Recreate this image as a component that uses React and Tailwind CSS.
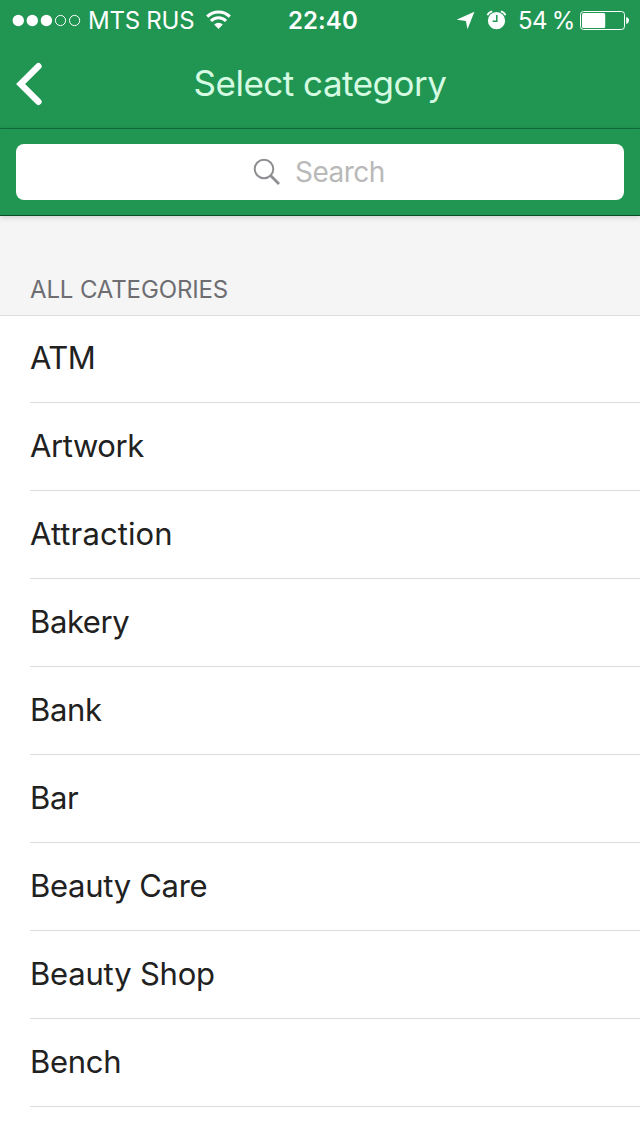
const categories = [
  { name: "ATM", tracking: "tracking-[-0.5px]" },
  { name: "Artwork", tracking: "tracking-[-0.4px]" },
  { name: "Attraction", tracking: "tracking-[0.1px]" },
  { name: "Bakery", tracking: "tracking-[-0.4px]" },
  { name: "Bank", tracking: "tracking-[-0.3px]" },
  { name: "Bar", tracking: "tracking-[-0.3px]" },
  { name: "Beauty Care", tracking: "tracking-[-0.3px]" },
  { name: "Beauty Shop", tracking: "tracking-[-0.2px]" },
  { name: "Bench", tracking: "tracking-[-0.3px]" },
];

function SignalDots() {
  return (
    <svg className="w-[70px] h-10 shrink-0" viewBox="0 0 70 40" fill="none">
      <circle cx="6.3" cy="20.5" r="5.7" fill="white" />
      <circle cx="20.3" cy="20.5" r="5.7" fill="white" />
      <circle cx="34.4" cy="20.5" r="5.7" fill="white" />
      <circle cx="48.5" cy="20.5" r="5.1" stroke="white" />
      <circle cx="62.6" cy="20.5" r="5.1" stroke="white" />
    </svg>
  );
}

function WifiIcon() {
  return (
    <svg className="w-[26px] h-10 shrink-0" viewBox="0 0 26 40" fill="none">
      <path d="M1.2 16.6a16 16 0 0 1 22.6 0" stroke="white" strokeWidth="3" />
      <path d="M5 21a10.5 10.5 0 0 1 15 0" stroke="white" strokeWidth="3" />
      <path d="M8.2 24.6a6.2 6.2 0 0 1 8.6 0L12.5 29z" fill="white" />
    </svg>
  );
}

function LocationIcon() {
  return (
    <svg className="w-[18px] h-10 shrink-0" viewBox="0 0 18 40">
      <path d="M17.4 11.8 10.5 29.3 8.9 20.9 -0.4 19.6z" fill="white" />
    </svg>
  );
}

function AlarmIcon() {
  return (
    <svg className="w-[22px] h-10 shrink-0" viewBox="0 0 22 40" fill="none">
      <circle cx="10.5" cy="20.7" r="8.6" fill="white" />
      <path d="M1.5 15.3Q2.4 12.5 6.2 11.4M14.8 11.4Q18.6 12.5 19.5 15.3" stroke="white" strokeWidth="1.8" />
      <path d="M10.8 15v6.2H6.6" stroke="#219653" strokeWidth="1.5" />
    </svg>
  );
}

function BatteryIcon() {
  return (
    <svg className="w-[50px] h-10 shrink-0" viewBox="0 0 50 40" fill="none">
      <rect x="0.5" y="11.5" width="44" height="18" rx="3" stroke="white" />
      <rect x="2" y="13" width="23.2" height="15" rx="1.5" fill="white" />
      <path d="M46.2 17q2.8.8 2.8 3.5T46.2 24z" fill="white" />
    </svg>
  );
}

function StatusBar() {
  return (
    <div className="flex h-10 items-center pl-3 text-[24px] leading-10 text-white whitespace-nowrap">
      <SignalDots />
      <span className="ml-[6px] w-[112px] pt-[2px] tracking-[-0.25px]">MTS RUS</span>
      <span className="ml-[6px] flex">
        <WifiIcon />
      </span>
      <span className="ml-[56px] w-[74px] pt-[2px] font-semibold tracking-[0.1px]">22:40</span>
      <span className="ml-[95px] flex">
        <LocationIcon />
      </span>
      <span className="ml-[11px] flex">
        <AlarmIcon />
      </span>
      <span className="ml-[10px] w-[62px] pt-[2px] tracking-[-0.5px] [word-spacing:-1.5px]">54 %</span>
      <BatteryIcon />
    </div>
  );
}

function NavBar() {
  return (
    <div className="flex h-[89px] items-start border-b border-[#126f3a]">
      <button type="button" aria-label="Back" className="w-[60px] shrink-0">
        <svg className="w-[60px] h-[88px]" viewBox="0 0 60 88" fill="none">
          <path d="M38.4 26.2 20.6 44 38.4 61.8" stroke="white" strokeWidth="6.4" strokeLinecap="round" />
        </svg>
      </button>
      <h1 className="flex-1 pr-[60px] text-center text-[35px] leading-[86px] text-[#d5fbe2] tracking-[-0.5px]">
        Select category
      </h1>
    </div>
  );
}

function SearchBar() {
  return (
    <div className="relative h-[87px] border-b border-[#0b4f29] px-4 pt-[15px] shadow-[0_1px_6px_rgba(0,0,0,0.18)]">
      <div className="flex h-14 items-center rounded-lg bg-white pl-[236px]">
        <svg className="w-[30px] h-[30px]" viewBox="0 0 30 30" fill="none" stroke="#8e8e93">
          <circle cx="12" cy="12" r="9.3" strokeWidth="2" />
          <path d="M18.5 18.6 27 27" strokeWidth="2.8" />
        </svg>
        <span className="ml-[13px] text-[28px] leading-[56px] tracking-[-0.5px] text-[#b9b9b9]">Search</span>
      </div>
    </div>
  );
}

export default function App() {
  return (
    <div className="flex h-[1136px] w-[640px] flex-col overflow-hidden bg-white font-['Inter',sans-serif]">
      <header className="relative z-10 bg-[#219653]">
        <StatusBar />
        <NavBar />
        <SearchBar />
      </header>
      <h2 className="h-[100px] shrink-0 border-b border-[#dcdcde] bg-[#f5f5f5] pl-[30px] pt-[54px] text-[24px] leading-[40px] tracking-[-0.13px] text-[#6d6d72]">
        ALL CATEGORIES
      </h2>
      <ul className="-mt-px pl-[30px]">
        {categories.map(({ name, tracking }) => (
          <li
            key={name}
            className={`h-[88px] border-b border-[#dcdcde] text-[31px] leading-[86px] text-[#212121] ${tracking}`}
          >
            {name}
          </li>
        ))}
      </ul>
    </div>
  );
}
